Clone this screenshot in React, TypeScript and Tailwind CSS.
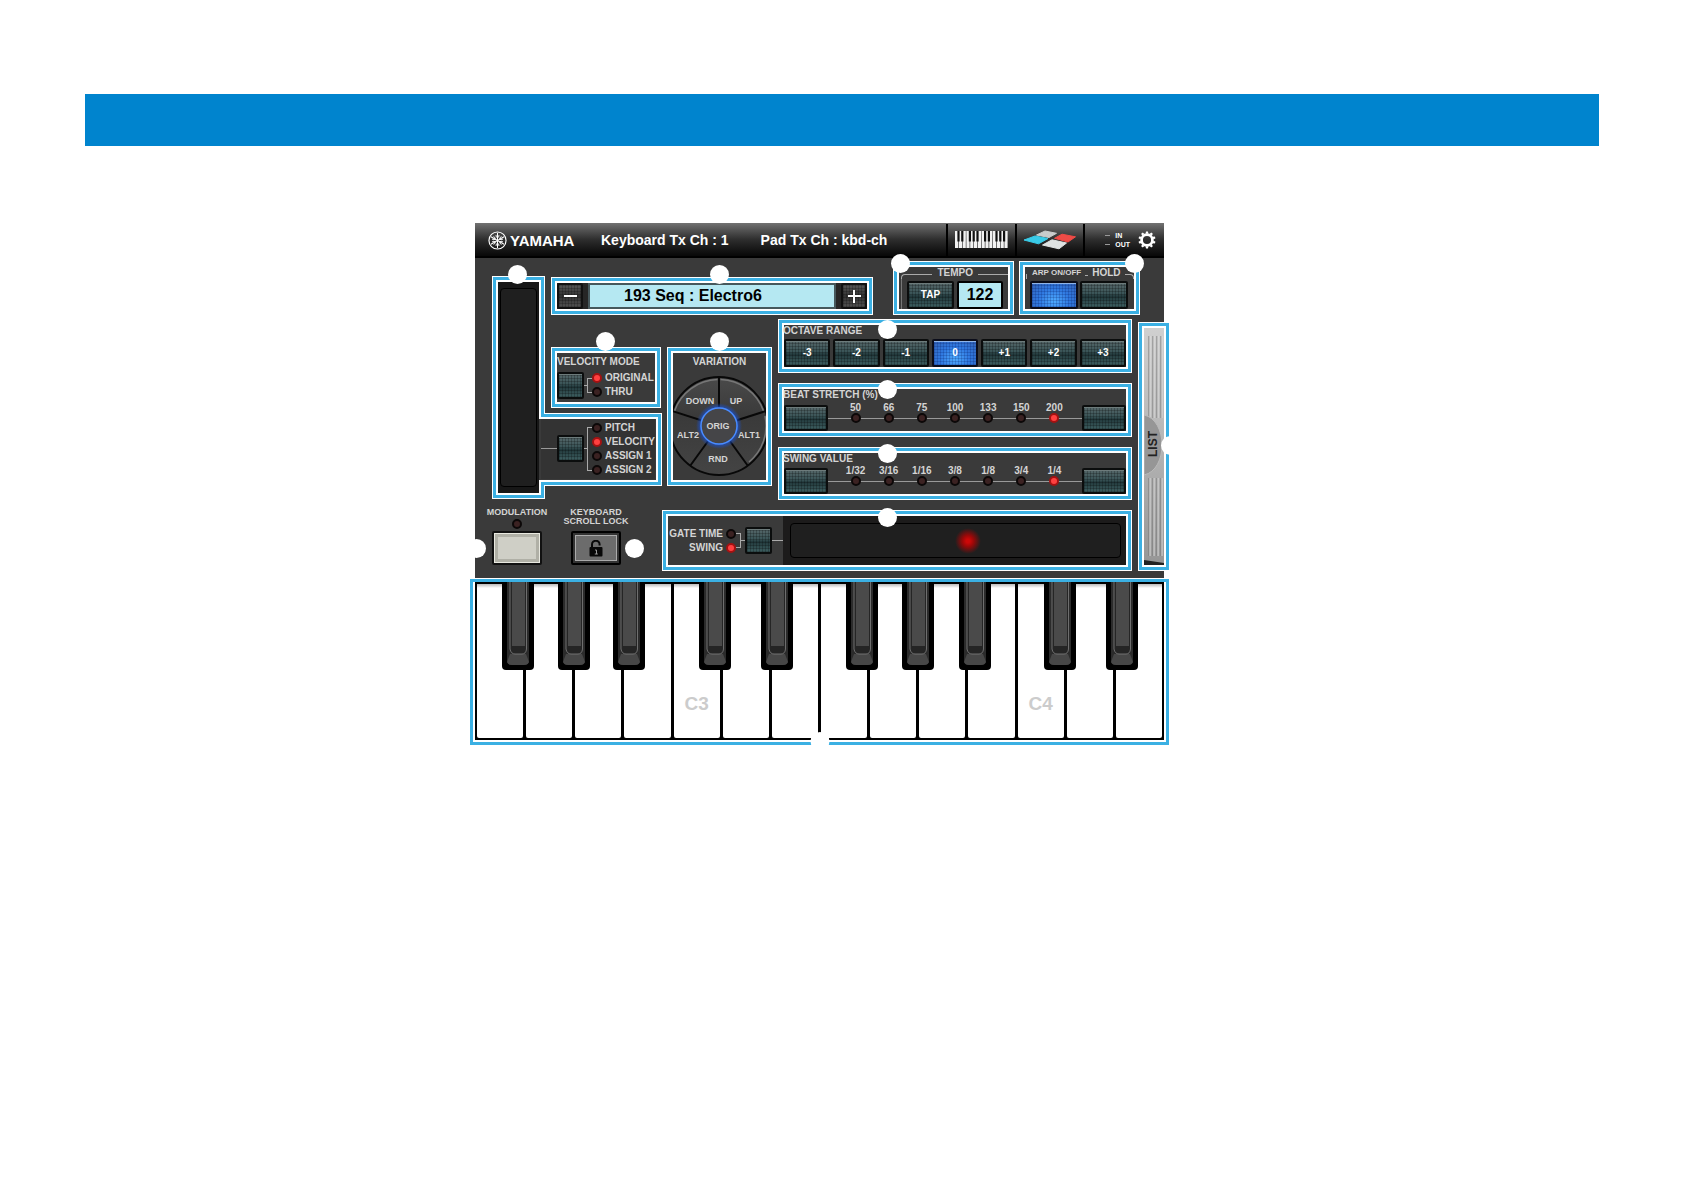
import type { ReactNode } from "react";
import clsx from "clsx";

const OCTAVES = ["-3", "-2", "-1", "0", "+1", "+2", "+3"];
const STRETCH = ["50", "66", "75", "100", "133", "150", "200"];
const SWING = ["1/32", "3/16", "1/16", "3/8", "1/8", "3/4", "1/4"];
const WHITE_KEYS = ["F2", "G2", "A2", "B2", "C3", "D3", "E3", "F3", "G3", "A3", "B3", "C4", "D4", "E4"];

const BLACK_KEYS = [
  { note: "F#2", place: "left-[6.2%]" },
  { note: "G#2", place: "left-[14.3%]" },
  { note: "A#2", place: "left-[22.4%]" },
  { note: "C#3", place: "left-[34.8%]" },
  { note: "D#3", place: "left-[43.9%]" },
  { note: "F#3", place: "left-[56.2%]" },
  { note: "G#3", place: "left-[64.3%]" },
  { note: "A#3", place: "left-[72.5%]" },
  { note: "C#4", place: "left-[84.9%]" },
  { note: "D#4", place: "left-[93.9%]" },
];

const VARIATIONS = [
  { label: "DOWN", place: "left-[27px] top-[48px]" },
  { label: "UP", place: "left-[63px] top-[48px]" },
  { label: "ORIG", place: "left-[45px] top-[73px]" },
  { label: "ALT2", place: "left-[15px] top-[82px]" },
  { label: "ALT1", place: "left-[76px] top-[82px]" },
  { label: "RND", place: "left-[45px] top-[106px]" },
];

const pad =
  "rounded-xs border-2 border-[#0b0d0d] text-[10px] leading-none font-bold text-white shadow-[inset_0_1px_0_#6d7b7b] bg-[repeating-linear-gradient(90deg,rgba(0,0,0,0.22)_0_1px,transparent_1px_3px),repeating-linear-gradient(0deg,rgba(0,0,0,0.22)_0_1px,transparent_1px_3px),linear-gradient(#566769,#395457_45%,#22393c_55%,#3d5e60)]";
const padLit =
  "rounded-xs border-2 border-[#0b0d1a] text-[10px] leading-none font-bold text-white shadow-[inset_0_1px_0_#8fb4e8] bg-[repeating-linear-gradient(90deg,rgba(0,20,90,0.2)_0_1px,transparent_1px_3px),repeating-linear-gradient(0deg,rgba(0,20,90,0.2)_0_1px,transparent_1px_3px),radial-gradient(ellipse_at_50%_75%,#4fabff,#2f78e0_50%,#3462b4)]";
const padGrey =
  "rounded-xs border-2 border-[#111] text-white bg-[repeating-linear-gradient(90deg,rgba(0,0,0,0.2)_0_1px,transparent_1px_3px),repeating-linear-gradient(0deg,rgba(0,0,0,0.2)_0_1px,transparent_1px_3px),linear-gradient(#555,#333_50%,#505050)]";

function Marker({ className }: { className: string }) {
  return <span className={clsx("absolute z-10 size-[19px] rounded-full bg-white", className)} />;
}

function Frame({ className, marker, children }: { className?: string; marker?: string; children: ReactNode }) {
  return (
    <div
      className={clsx(
        "relative p-[6px] shadow-[inset_0_0_0_1px_white,inset_0_0_0_4px_#3bb0e3,inset_0_0_0_6px_white]",
        className,
      )}
    >
      <div className="relative h-full">{children}</div>
      {marker && <Marker className={marker} />}
    </div>
  );
}

function Led({ on }: { on?: boolean }) {
  return (
    <span
      className={clsx(
        "block size-[10px] shrink-0 rounded-full border-2",
        on ? "border-[#a31212] bg-[#ff4040]" : "border-[#0c0808] bg-[#3b2222]",
      )}
    />
  );
}

function YamahaLogo() {
  return (
    <div className="flex w-[86px] items-center gap-[3px] text-white">
      <svg viewBox="0 0 20 20" className="size-[19px] shrink-0" fill="none" stroke="currentColor">
        <circle cx="10" cy="10" r="9" strokeWidth="1.2" />
        {[0, 60, 120, 180, 240, 300].map((angle) => (
          <g key={angle} transform={`rotate(${angle} 10 10)`}>
            <path d="M10 10V2" strokeWidth="1.1" />
            <path d="M8.4 4.2L8.8 6.4L10 7L11.2 6.4L11.6 4.2" strokeWidth="0.9" />
          </g>
        ))}
      </svg>
      <span className="text-[15px] leading-none">YAMAHA</span>
    </div>
  );
}

function PianoIcon() {
  return (
    <svg viewBox="0 0 53 18" className="h-[18px] w-[53px]">
      {Array.from({ length: 14 }, (_, i) => (
        <rect key={i} x={i * 3.8} y="0" width="3.2" height="17" fill="#f2f2f2" />
      ))}
      {[0, 1, 3, 4, 5, 7, 8, 10, 11, 12].map((i) => (
        <rect key={i} x={i * 3.8 + 2.4} y="0" width="2.2" height="10.5" fill="#111" />
      ))}
    </svg>
  );
}

function PadsIcon() {
  return (
    <svg viewBox="0 0 54 20" className="h-5 w-[54px]" strokeLinejoin="round" strokeWidth="1">
      <path d="M13.500 5L22 1L33.500 3.300L26 7.500Z" fill="#c9cccc" stroke="#c9cccc" />
      <path d="M31.500 8.300L39 4.200L52.500 6.800L45 12Z" fill="#ee4b46" stroke="#ee4b46" />
      <path d="M1 10L12 6L25 8.500L15.500 13.800Z" fill="#39cbe8" stroke="#39cbe8" />
      <path d="M19.500 15L29 9.800L43.500 13L36 18.800Z" fill="#dfe3e3" stroke="#dfe3e3" />
    </svg>
  );
}

function GearIcon() {
  return (
    <svg viewBox="0 0 20 20" className="size-[18px]">
      {Array.from({ length: 10 }, (_, i) => (
        <path key={i} d="M8.400 3L8.900 .5H11.100L11.600 3Z" fill="#fff" transform={`rotate(${i * 36} 10 10)`} />
      ))}
      <circle cx="10" cy="10" r="6" fill="none" stroke="#fff" strokeWidth="3" />
    </svg>
  );
}

function Header() {
  return (
    <header className="flex h-[35px] items-stretch border-b-2 border-black bg-linear-to-b from-[#727272] via-[#2e2e2e] via-50% to-[#080808] pt-px pl-[13px] text-[14px] font-bold whitespace-nowrap text-white">
      <div className="flex flex-1 items-center">
        <YamahaLogo />
        <span className="ml-[27px]">Keyboard Tx Ch : 1</span>
        <span className="ml-[32px]">Pad Tx Ch : kbd-ch</span>
      </div>
      <button type="button" aria-label="Keyboard" className="flex w-[69px] items-center justify-center border-l-2 border-black">
        <PianoIcon />
      </button>
      <button type="button" aria-label="Pads" className="flex w-[68px] items-center justify-center border-l-2 border-black">
        <PadsIcon />
      </button>
      <div className="flex w-[81px] items-center justify-end gap-2 border-l-2 border-black pr-2">
        <div className="flex flex-col gap-[2px] text-[7px] leading-[7px]">
          <span className="flex items-center gap-[5px]">
            <i className="h-px w-[5px] bg-[#999]" /> IN
          </span>
          <span className="flex items-center gap-[5px]">
            <i className="h-px w-[5px] bg-[#999]" /> OUT
          </span>
        </div>
        <button type="button" aria-label="Settings">
          <GearIcon />
        </button>
      </div>
    </header>
  );
}

function TopRow() {
  return (
    <div className="col-span-4 col-start-2 row-start-1 flex items-end pr-[30px]">
      <Frame className="mr-5 h-[38px] flex-1" marker="-top-[12px] left-1/2 ml-[-2px]">
        <div className="flex h-full items-center bg-[#262626]">
          <button type="button" aria-label="Previous" className={clsx("flex size-[26px] items-center justify-center", padGrey)}>
            <i className="h-[2px] w-[13px] bg-white" />
          </button>
          <div className="mx-[5px] flex h-full flex-1 items-center border-2 border-[#46585c] bg-[#b5e8f2] pl-[34px] text-[16px] font-bold text-black">
            193 Seq : Electro6
          </div>
          <button type="button" aria-label="Next" className={clsx("relative flex size-[26px] items-center justify-center", padGrey)}>
            <i className="h-[2px] w-[13px] bg-white" />
            <i className="absolute h-[13px] w-[2px] bg-white" />
          </button>
        </div>
      </Frame>
      <Frame className="mr-[5px] h-[54px] w-[121px]" marker="-top-[7px] -left-[2px]">
        <div className="flex items-center gap-[5px] pl-[2px] text-[10px] leading-[10px] font-bold">
          <i className="mt-[7px] h-[5px] flex-1 rounded-tl border-t border-l border-[#aaa]" />
          TEMPO
          <i className="mt-[7px] h-[5px] w-[30px] border-t border-[#aaa]" />
        </div>
        <div className="ml-[2px] flex gap-[3px] border-l border-[#777] pt-[2px] pl-[5px]">
          <button type="button" className={clsx("h-[28px] w-[47px]", pad)}>
            TAP
          </button>
          <div className="flex h-[28px] w-[46px] items-center justify-center rounded-xs border-2 border-black bg-[#b5e8f2] text-[16px] font-bold text-black">
            122
          </div>
        </div>
      </Frame>
      <Frame className="h-[54px] w-[121px]" marker="-top-[7px] -right-[4px]">
        <div className="flex items-center gap-1 pl-px text-[10px] leading-[10px] font-bold whitespace-nowrap">
          <i className="mt-[7px] h-[5px] w-[2px] border-l border-[#aaa]" />
          <span className="text-[8px]">ARP ON/OFF</span>
          <i className="mt-[5px] h-px w-[3px] bg-[#aaa]" />
          HOLD
          <i className="mt-[7px] h-[5px] flex-1 rounded-tr border-t border-r border-[#aaa]" />
        </div>
        <div className="flex gap-[2px] pt-[2px] pl-[5px]">
          <button type="button" aria-label="Arp on/off" className={clsx("h-[28px] w-[48px]", padLit)} />
          <button type="button" aria-label="Hold" className={clsx("h-[28px] w-[48px]", pad)} />
        </div>
      </Frame>
    </div>
  );
}

function Ribbon() {
  return (
    <div className="relative col-start-1 row-span-2 row-start-1 mt-[15px] h-[223px] p-[6px]">
      <div className="h-full w-[41px] bg-[#171717] px-[2px] py-[6px]">
        <div className="h-full rounded border border-black bg-[#1f1f1f]" />
      </div>
      <svg width="170" height="223" viewBox="0 0 170 223" className="absolute top-0 left-0" fill="none">
        <path d="M3 3H50V140H167V207H50V220H3Z" stroke="#fff" strokeWidth="6" />
        <path d="M2.500 2.500H50.500V139.500H167.500V207.500H50.500V220.500H2.500Z" stroke="#3bb0e3" strokeWidth="3" />
      </svg>
      <Marker className="-top-[11px] left-[16px]" />
    </div>
  );
}

function Assign() {
  return (
    <div className="col-start-2 row-start-2 pt-8">
      <Frame className="h-[61px]" marker="-top-[15px] left-[45px]">
        <p className="text-[10px] leading-[18px] font-bold">VELOCITY MODE</p>
        <div className="flex items-center">
          <button type="button" aria-label="Velocity mode" className={clsx("size-[27px] shrink-0", pad)} />
          <i className="h-px w-[3px] bg-[#aaa]" />
          <i className="h-[15px] w-[5px] border-y border-l border-[#aaa]" />
          <ul className="text-[10px] leading-[14px] font-bold">
            <li className="flex items-center gap-[3px]"><Led on />ORIGINAL</li>
            <li className="flex items-center gap-[3px]"><Led />THRU</li>
          </ul>
        </div>
      </Frame>
      <div className="mt-[10px] mr-[6px] -ml-[10px] flex h-[61px] items-center overflow-hidden bg-[#333]">
        <i className="h-px w-[16px] shrink-0 bg-[#999]" />
        <button type="button" aria-label="Ribbon target" className={clsx("size-[27px] shrink-0", pad)} />
        <i className="h-px w-[3px] shrink-0 bg-[#aaa]" />
        <i className="h-[44px] w-[5px] shrink-0 border-y border-l border-[#aaa]" />
        <ul className="text-[10px] leading-[14px] font-bold whitespace-nowrap">
          <li className="flex items-center gap-[3px]"><Led />PITCH</li>
          <li className="flex items-center gap-[3px]"><Led on />VELOCITY</li>
          <li className="flex items-center gap-[3px]"><Led />ASSIGN 1</li>
          <li className="flex items-center gap-[3px]"><Led />ASSIGN 2</li>
        </ul>
      </div>
    </div>
  );
}

function Variation() {
  return (
    <div className="col-start-3 row-start-2 pt-8">
      <Frame className="h-[139px]" marker="-top-[15px] left-[43px]">
        <p className="text-center text-[10px] leading-[18px] font-bold">VARIATION</p>
        <svg width="93" height="127" viewBox="0 0 93 127" className="absolute top-0 left-0">
          <defs>
            <linearGradient id="wheel" x1="0" y1="0" x2="0" y2="1">
              <stop offset="0" stopColor="#4a4a4a" />
              <stop offset="0.4" stopColor="#3a3a3a" />
              <stop offset="1" stopColor="#444" />
            </linearGradient>
            <radialGradient id="glow">
              <stop offset="0.75" stopColor="#1c4fc4" />
              <stop offset="1" stopColor="#1c4fc4" stopOpacity="0" />
            </radialGradient>
          </defs>
          <circle cx="46" cy="73" r="49" fill="url(#wheel)" stroke="#080808" strokeWidth="2" />
          <path d="M1.500 58A47 47 0 0 1 44.500 26.500M47.500 26.500A47 47 0 0 1 90.500 58M92 63A47 47 0 0 1 76 109" fill="none" stroke="#777" strokeWidth="1.500" />
          <path d="M46 73V24M46 73L93 58M46 73L75 113M46 73L17 113M46 73L-1 58" stroke="#080808" strokeWidth="2" />
          <circle cx="46" cy="73" r="23" fill="url(#glow)" />
          <circle cx="46" cy="73" r="18" fill="#454548" stroke="#4a8cff" strokeWidth="1.500" />
        </svg>
        {VARIATIONS.map(({ label, place }) => (
          <button
            key={label}
            type="button"
            className={clsx("absolute -translate-x-1/2 -translate-y-1/2 text-[9px] leading-none font-bold", place)}
          >
            {label}
          </button>
        ))}
      </Frame>
    </div>
  );
}

function StepRow({ title, steps }: { title: string; steps: string[] }) {
  return (
    <Frame className="h-[54px]" marker="-top-[3px] left-[100px]">
      <p className="absolute top-0 -left-px text-[10px] leading-[11px] font-bold">{title}</p>
      <div className="flex h-full items-end">
        <button type="button" aria-label={`${title} down`} className={clsx("h-[26px] w-[44px]", pad)} />
        <div className="relative grid h-[29px] flex-1 grid-cols-7 px-[11px]">
          <i className="absolute top-[16px] h-px w-full bg-[#999]" />
          {steps.map((step, i) => (
            <div key={step} className="relative flex flex-col items-center text-[10px] leading-[11px] font-bold">
              {step}
              <Led on={i === steps.length - 1} />
            </div>
          ))}
        </div>
        <button type="button" aria-label={`${title} up`} className={clsx("h-[26px] w-[44px]", pad)} />
      </div>
    </Frame>
  );
}

function Parameters() {
  return (
    <div className="col-start-4 row-start-2 flex flex-col gap-[10px] pt-1">
      <Frame className="h-[54px]" marker="top-[1px] left-[100px]">
        <p className="-ml-px text-[10px] leading-[11px] font-bold">OCTAVE RANGE</p>
        <div className="mt-[3px] flex gap-[3px]">
          {OCTAVES.map((octave) => (
            <button key={octave} type="button" className={clsx("h-[28px] flex-1", octave === "0" ? padLit : pad)}>
              {octave}
            </button>
          ))}
        </div>
      </Frame>
      <StepRow title="BEAT STRETCH (%)" steps={STRETCH} />
      <StepRow title="SWING VALUE" steps={SWING} />
    </div>
  );
}

function ListHandle() {
  return (
    <div className="col-start-5 row-span-2 row-start-2 pt-[7px]">
      <Frame className="h-[249px]" marker="top-[114px] -right-[10px]">
        <button type="button" className="flex h-full w-full items-center justify-center bg-linear-to-b from-[#d0d0d0] via-[#b4b4b4] to-[#969696] pr-[3px] pb-[6px] text-[12px] font-bold text-[#222]">
          <svg width="20" height="237" viewBox="0 0 20 237" className="absolute top-0 left-0">
            <path d="M5 8V90M9 8V90M13 8V90M17 8V90M5 150V228M9 150V228M13 150V228M17 150V228" stroke="#777" strokeWidth="1" />
            <path d="M6 8V90M10 8V90M14 8V90M18 8V90M6 150V228M10 150V228M14 150V228M18 150V228" stroke="#ddd" strokeWidth="1" />
            <path d="M0 87C24 92 24 142 0 147Z" fill="#969696" stroke="#bbb" />
            <path d="M0 232L20 235V237H0Z" fill="#222" />
          </svg>
          <span className="relative rotate-180 leading-[12px] [writing-mode:vertical-rl]">LIST</span>
        </button>
      </Frame>
    </div>
  );
}

function BottomRow() {
  return (
    <div className="col-span-4 col-start-1 row-start-3 flex pt-[10px] text-[9px] leading-[9px] font-bold">
      <div className="relative flex w-[50px] flex-col items-center">
        <span className="mt-[-2px] whitespace-nowrap">MODULATION</span>
        <span className="mt-[2px]"><Led /></span>
        <button
          type="button"
          aria-label="Modulation"
          className="mt-[2px] h-[34px] w-[50px] rounded-xs border-2 border-[#111] bg-[#cfcfc6] shadow-[inset_0_0_0_1px_#e8e8df,inset_0_0_0_4px_#b0b0a6]"
        />
        <Marker className="top-[29px] -left-[25px]" />
      </div>
      <div className="relative ml-5 flex w-[68px] flex-col items-center text-center">
        <span className="mt-[-2px] whitespace-nowrap">KEYBOARD<br />SCROLL LOCK</span>
        <button
          type="button"
          aria-label="Keyboard scroll lock"
          className="mt-[5px] flex h-[34px] w-[50px] items-center justify-center rounded-xs border-2 border-black bg-[#6c6c6c] shadow-[inset_0_0_0_2px_#333,inset_0_0_0_3px_#aaa]"
        >
          <svg viewBox="0 0 14 17" className="h-[17px] w-[14px]">
            <path d="M3 8V4.500A3.800 3.800 0 0 1 10.600 4.500V5.500" fill="none" stroke="#080808" strokeWidth="2" />
            <rect x="0.500" y="7" width="13" height="9.500" rx="1" fill="#080808" />
            <path d="M6 10H7.500V14M5.800 14H8.800" stroke="#999" fill="none" />
          </svg>
        </button>
        <Marker className="top-[29px] left-[63px]" />
      </div>
      <Frame className="ml-8 h-[61px] flex-1" marker="-top-[2px] left-[216px]">
        <div className="flex h-full items-center">
          <ul className="flex w-[68px] flex-col items-end text-[10px] leading-[14px] whitespace-nowrap">
            <li className="flex items-center gap-[3px]">GATE TIME <Led /></li>
            <li className="flex items-center gap-[3px]">SWING <Led on /></li>
          </ul>
          <i className="h-[15px] w-[5px] border-y border-r border-[#aaa]" />
          <i className="h-px w-[4px] bg-[#aaa]" />
          <button type="button" aria-label="Ribbon function" className={clsx("size-[27px]", pad)} />
          <i className="h-px w-[11px] bg-[#aaa]" />
          <div className="h-full flex-1 bg-[#1c1b1b] py-[7px] pr-[5px] pl-[7px]">
            <div className="flex h-full items-center justify-center rounded border border-black bg-[#1f1f1f] pl-6">
              <i className="size-[26px] bg-[radial-gradient(circle,#cc0808_10%,#9c0808_30%,transparent_70%)]" />
            </div>
          </div>
        </div>
      </Frame>
    </div>
  );
}

function Keyboard() {
  return (
    <div className="relative p-[6px] pt-1 shadow-[inset_0_0_0_1px_white,inset_0_0_0_4px_#3bb0e3,inset_0_0_0_6px_white]">
      <div className="relative flex h-[158px] gap-[3px] bg-black px-[2px] py-[2px]">
        {WHITE_KEYS.map((note) => (
          <button
            key={note}
            type="button"
            aria-label={note}
            className="flex flex-1 items-end justify-center rounded-b-xs bg-linear-to-b from-[#bbb] to-white to-[4px] pb-[22px] text-[19px] leading-[24px] font-bold text-[#ccc]"
          >
            {note.startsWith("C") ? note : ""}
          </button>
        ))}
        {BLACK_KEYS.map(({ note, place }) => (
          <button
            key={note}
            type="button"
            aria-label={note}
            className={clsx("absolute top-0 h-[88px] w-[32px] -translate-x-1/2 rounded-b-sm bg-black", place)}
          >
            <svg viewBox="0 0 32 88" className="h-[88px] w-[32px]">
              <path d="M5 0H27V78Q27 83 22 83H10Q5 83 5 78Z" fill="#2b2b2b" />
              <path d="M8 72H24L27 80Q26 83 22 83H10Q6 83 5 80Z" fill="#474747" />
              <path d="M8 0V67Q9 72 13 72H20Q24 72 24.500 67V0" fill="#252525" stroke="#808080" strokeWidth="0.800" />
              <rect x="10" y="0" width="13" height="64" fill="#4a4a4a" />
            </svg>
          </button>
        ))}
      </div>
      <Marker className="-bottom-[5px] left-1/2 -translate-x-1/2" />
    </div>
  );
}

export default function App() {
  return (
    <div className="min-h-screen bg-white px-[85px] pt-[94px] font-['Liberation_Sans',Arial,sans-serif]">
      <div className="h-[52px] bg-[#0084ce]" />
      <main className="pt-[77px] pr-[45px]">
        <div className="mx-auto w-full max-w-[701px]">
          <div className="mx-[6px] bg-[#3a3a3a] text-[#d4d4d4]">
            <Header />
            <div className="-mr-[6px] grid grid-cols-[53px_110px_105px_minmax(0,1fr)_32px] grid-rows-[54px_185px_auto] gap-x-[6px] pt-[3px] pb-[7px] pl-[17px]">
              <TopRow />
              <Ribbon />
              <Assign />
              <Variation />
              <Parameters />
              <ListHandle />
              <BottomRow />
            </div>
          </div>
          <Keyboard />
        </div>
      </main>
    </div>
  );
}
